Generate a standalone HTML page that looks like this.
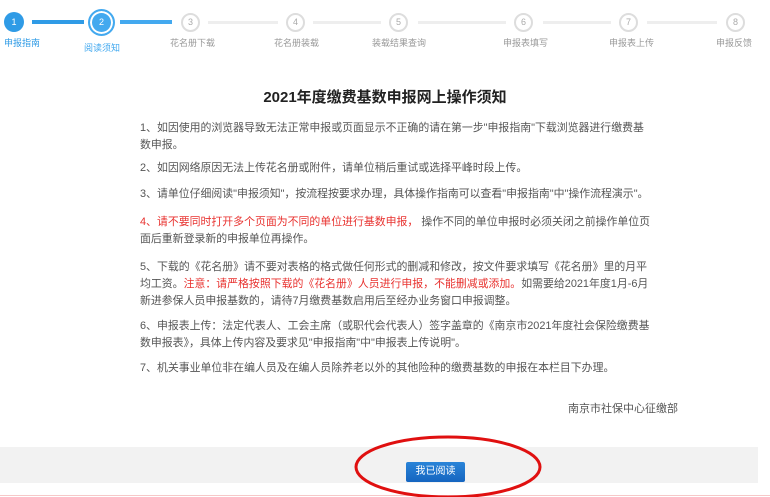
<!DOCTYPE html>
<html><head><meta charset="utf-8"><style>
*{margin:0;padding:0}
body{width:770px;height:497px;background:#fff;position:relative;overflow:hidden;font-family:"Liberation Sans","Noto Sans CJK SC",sans-serif;color:#444}
.a{position:absolute;white-space:nowrap}
.c{position:absolute;border-radius:50%;box-sizing:border-box;text-align:center;font-size:9px}
.g{border:2px solid #ddd;color:#aaa;background:#fff;width:19px;height:19px;line-height:15px}
.l{position:absolute;height:3px;top:21px}
.lb{font-size:9px;color:#999;top:36px}
p{position:absolute;left:140px;font-size:10.9px;line-height:17px;white-space:nowrap;color:#555}
.r{color:#e8322f}
</style></head><body>
<div class="l" style="left:32px;width:52px;background:#2f9be6;height:4px;top:20px"></div>
<div class="l" style="left:120px;width:52px;background:#43a9ef;height:4px;top:20px"></div>
<div class="l" style="left:208px;width:70px;background:#eee"></div>
<div class="l" style="left:313px;width:68px;background:#eee"></div>
<div class="l" style="left:418px;width:88px;background:#eee"></div>
<div class="l" style="left:543px;width:68px;background:#eee"></div>
<div class="l" style="left:647px;width:70px;background:#eee"></div>
<div class="c" style="left:4px;top:12px;width:20px;height:20px;line-height:20px;background:#2f9be6;color:#fff">1</div>
<div class="c" style="left:88px;top:9px;width:27px;height:27px;background:#43a9ef;border:2px solid #43a9ef;box-shadow:inset 0 0 0 2px #fff;color:#fff;line-height:23px">2</div>
<div class="c g" style="left:181px;top:13px">3</div>
<div class="c g" style="left:286px;top:13px">4</div>
<div class="c g" style="left:389px;top:13px">5</div>
<div class="c g" style="left:514px;top:13px">6</div>
<div class="c g" style="left:619px;top:13px">7</div>
<div class="c g" style="left:726px;top:13px">8</div>
<div class="a lb" style="left:4px;color:#2f9be6">申报指南</div>
<div class="a lb" style="left:84px;top:41px;color:#43a9ef">阅读须知</div>
<div class="a lb" style="left:170px">花名册下载</div>
<div class="a lb" style="left:274px">花名册装载</div>
<div class="a lb" style="left:372px">装载结果查询</div>
<div class="a lb" style="left:503px">申报表填写</div>
<div class="a lb" style="left:609px">申报表上传</div>
<div class="a lb" style="left:716px">申报反馈</div>
<div class="a" style="left:0;width:770px;text-align:center;top:86px;font-size:15px;font-weight:bold;color:#222">2021年度缴费基数申报网上操作须知</div>
<p style="top:120px">1、如因使用的浏览器导致无法正常申报或页面显示不正确的请在第一步"申报指南"下载浏览器进行缴费基<br>数申报。</p>
<p style="top:160px">2、如因网络原因无法上传花名册或附件，请单位稍后重试或选择平峰时段上传。</p>
<p style="top:186px">3、请单位仔细阅读"申报须知"，按流程按要求办理，具体操作指南可以查看"申报指南"中"操作流程演示"。</p>
<p style="top:214px"><span class="r">4、请不要同时打开多个页面为不同的单位进行基数申报，</span> 操作不同的单位申报时必须关闭之前操作单位页<br>面后重新登录新的申报单位再操作。</p>
<p style="top:259px">5、下载的《花名册》请不要对表格的格式做任何形式的删减和修改，按文件要求填写《花名册》里的月平<br>均工资。<span class="r">注意：请严格按照下载的《花名册》人员进行申报，不能删减或添加。</span>如需要给2021年度1月-6月<br>新进参保人员申报基数的，请待7月缴费基数启用后至经办业务窗口申报调整。</p>
<p style="top:318px">6、申报表上传：法定代表人、工会主席（或职代会代表人）签字盖章的《南京市2021年度社会保险缴费基<br>数申报表》，具体上传内容及要求见"申报指南"中"申报表上传说明"。</p>
<p style="top:360px">7、机关事业单位非在编人员及在编人员除养老以外的其他险种的缴费基数的申报在本栏目下办理。</p>
<div class="a" style="left:568px;top:400px;font-size:11px;color:#555">南京市社保中心征缴部</div>
<div class="a" style="left:0;top:447px;width:758px;height:36px;background:#f2f2f2"></div>
<div class="a" style="left:0;top:495px;width:770px;height:1px;background:#f6c8c8"></div>
<div class="a" style="left:406px;top:462px;width:59px;height:20px;background:linear-gradient(#2a84d8,#1565c0);border-radius:2px;color:#fff;font-size:10px;line-height:20px;text-align:center">我已阅读</div>
<svg class="a" style="left:0;top:0" width="770" height="497"><ellipse cx="448" cy="467" rx="92" ry="30" fill="none" stroke="#e01010" stroke-width="3"/></svg>
</body></html>
